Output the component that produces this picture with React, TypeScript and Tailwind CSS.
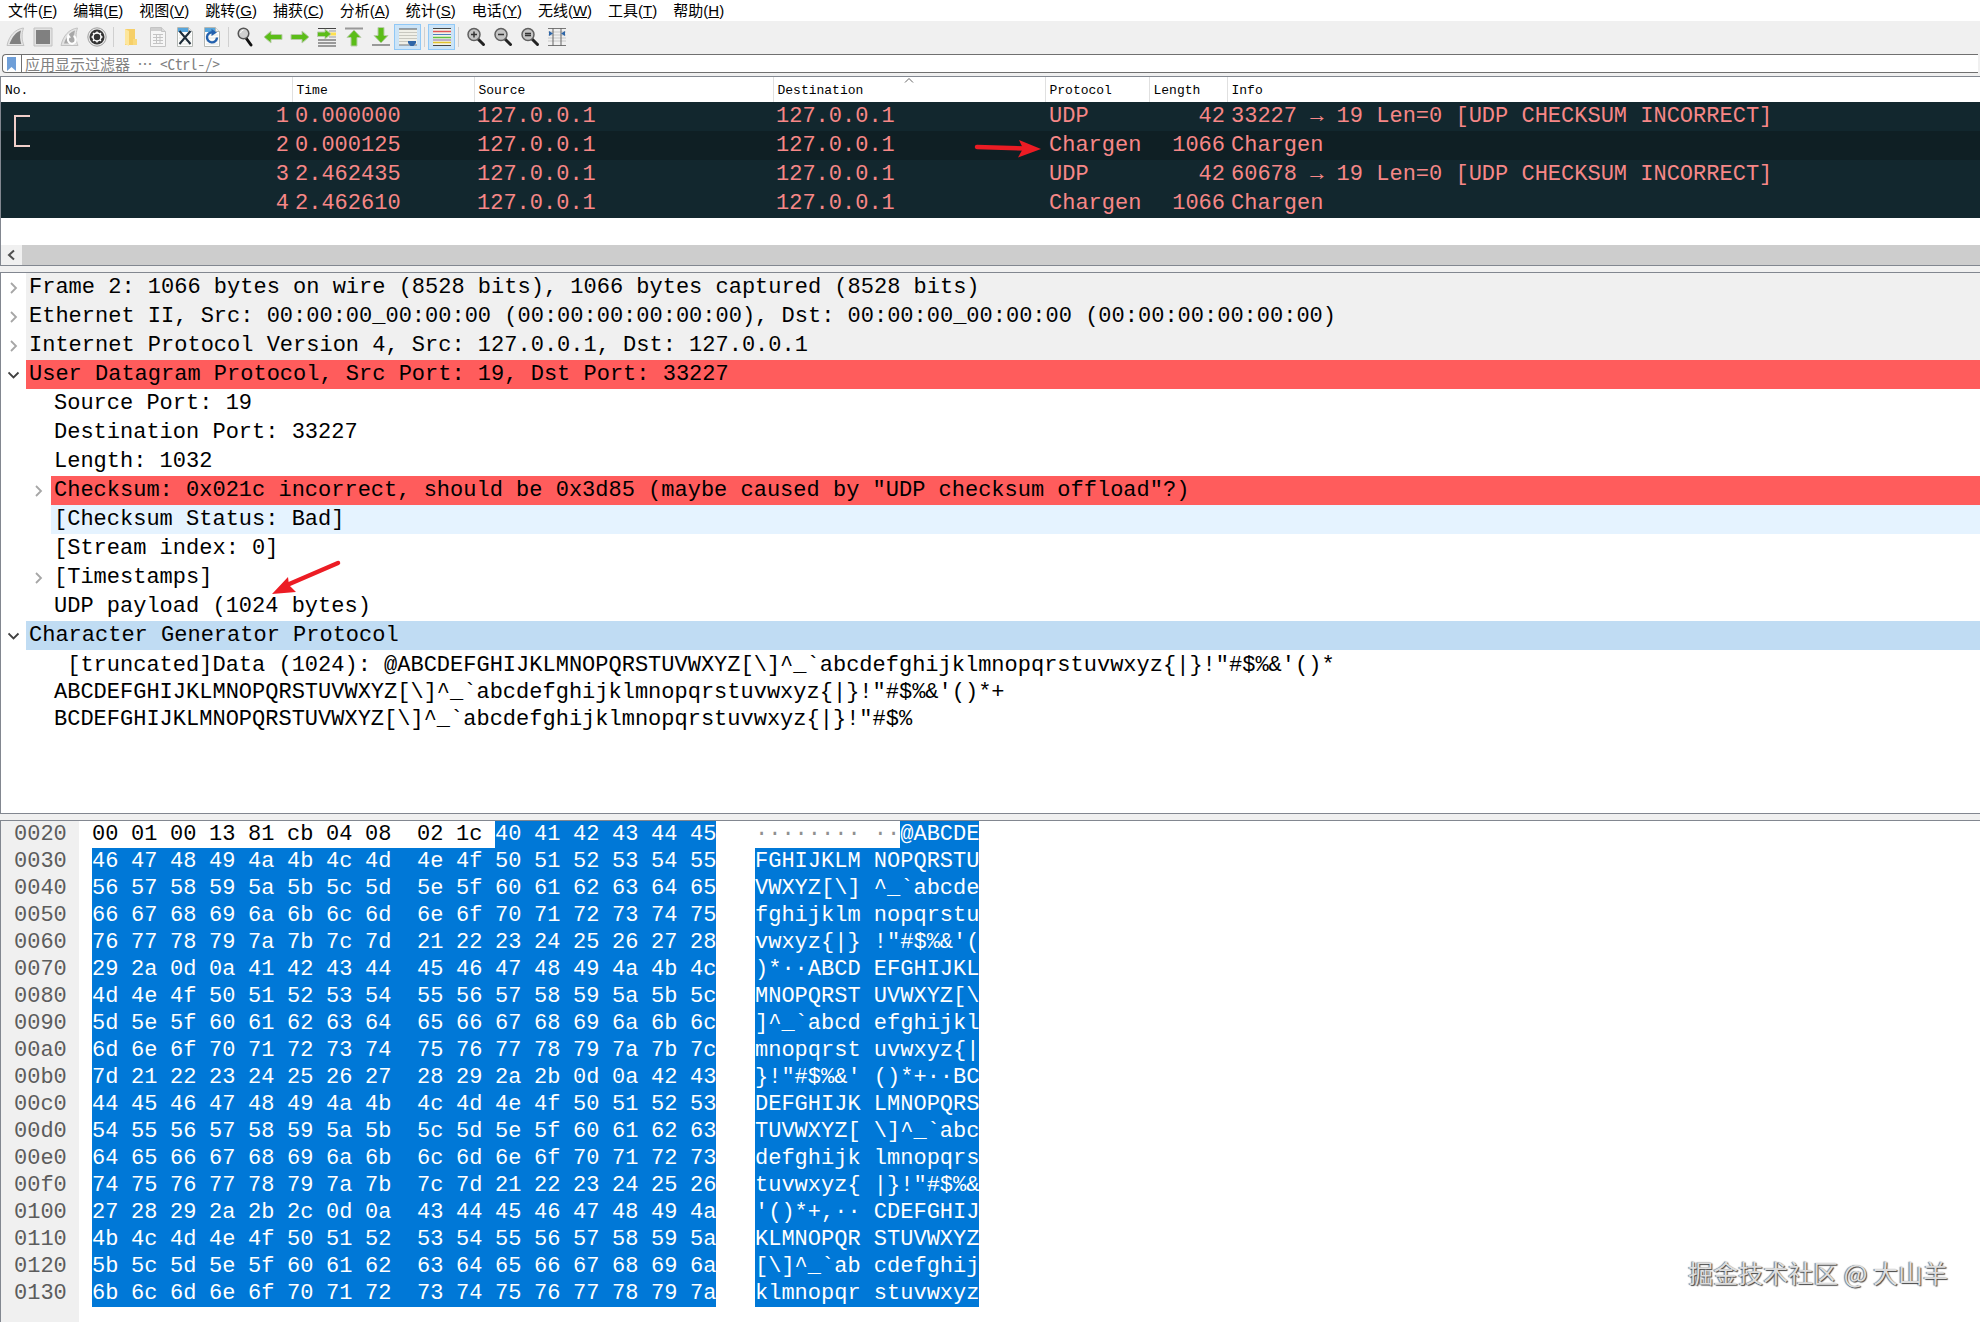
import React from 'react';

const MONO = "font-['Liberation_Mono','Noto_Sans_CJK_SC',monospace]";

const menus = [
  ['文件', 'F'], ['编辑', 'E'], ['视图', 'V'], ['跳转', 'G'], ['捕获', 'C'], ['分析', 'A'],
  ['统计', 'S'], ['电话', 'Y'], ['无线', 'W'], ['工具', 'T'], ['帮助', 'H'],
];

const packets = [
  { no: 1, time: '0.000000', proto: 'UDP', len: 42, info: '33227 → 19 Len=0 [UDP CHECKSUM INCORRECT]' },
  { no: 2, time: '0.000125', proto: 'Chargen', len: 1066, info: 'Chargen' },
  { no: 3, time: '2.462435', proto: 'UDP', len: 42, info: '60678 → 19 Len=0 [UDP CHECKSUM INCORRECT]' },
  { no: 4, time: '2.462610', proto: 'Chargen', len: 1066, info: 'Chargen' },
];

type TreeRow = { text: string; level: number; arrow?: 'open' | 'closed'; bg?: string };

const tree: TreeRow[] = [
  { text: 'Frame 2: 1066 bytes on wire (8528 bits), 1066 bytes captured (8528 bits)', level: 0, arrow: 'closed', bg: 'bg-[#f0f0f0]' },
  { text: 'Ethernet II, Src: 00:00:00_00:00:00 (00:00:00:00:00:00), Dst: 00:00:00_00:00:00 (00:00:00:00:00:00)', level: 0, arrow: 'closed', bg: 'bg-[#f0f0f0]' },
  { text: 'Internet Protocol Version 4, Src: 127.0.0.1, Dst: 127.0.0.1', level: 0, arrow: 'closed', bg: 'bg-[#f0f0f0]' },
  { text: 'User Datagram Protocol, Src Port: 19, Dst Port: 33227', level: 0, arrow: 'open', bg: 'bg-[#ff5c5c]' },
  { text: 'Source Port: 19', level: 1 },
  { text: 'Destination Port: 33227', level: 1 },
  { text: 'Length: 1032', level: 1 },
  { text: 'Checksum: 0x021c incorrect, should be 0x3d85 (maybe caused by "UDP checksum offload"?)', level: 1, arrow: 'closed', bg: 'bg-[#ff5c5c]' },
  { text: '[Checksum Status: Bad]', level: 1, bg: 'bg-[#e5f3ff]' },
  { text: '[Stream index: 0]', level: 1 },
  { text: '[Timestamps]', level: 1, arrow: 'closed' },
  { text: 'UDP payload (1024 bytes)', level: 1 },
  { text: 'Character Generator Protocol', level: 0, arrow: 'open', bg: 'bg-[#c0dcf3]' },
];

const truncated = [
  ' [truncated]Data (1024): @ABCDEFGHIJKLMNOPQRSTUVWXYZ[\\]^_`abcdefghijklmnopqrstuvwxyz{|}!"#$%&\'()*',
  'ABCDEFGHIJKLMNOPQRSTUVWXYZ[\\]^_`abcdefghijklmnopqrstuvwxyz{|}!"#$%&\'()*+',
  'BCDEFGHIJKLMNOPQRSTUVWXYZ[\\]^_`abcdefghijklmnopqrstuvwxyz{|}!"#$%',
];

// UDP header tail, then the chargen payload: 72 rotating characters per line + CRLF
const HEADER = [0x00, 0x01, 0x00, 0x13, 0x81, 0xcb, 0x04, 0x08, 0x02, 0x1c];

function buildBytes(total: number) {
  const out = [...HEADER];
  for (let line = 0; out.length < total; line++) {
    let c = 0x40 + line;
    for (let i = 0; i < 72; i++) {
      out.push(c);
      c = c === 0x7d ? 0x21 : c + 1;
    }
    out.push(0x0d, 0x0a);
  }
  return out.slice(0, total);
}

const bytes = buildBytes(18 * 16);

const hex = (n: number, width: number) => n.toString(16).padStart(width, '0');

// wider cell after the eighth byte, no trailing gap after the last one
function byteWidth(col: number) {
  if (col === 7) return 'w-[52px]';
  return col === 15 ? 'w-[26px]' : 'w-[39px]';
}

function asciiText(row: number[], from: number, to: number) {
  return row.slice(from, to).map((b, i) => {
    const ch = b > 0x20 && b < 0x7f ? String.fromCharCode(b) : '·';
    return ch + (from + i === 7 ? ' ' : '');
  }).join('');
}

function Separator() {
  return <div className="mx-[3px] h-5 w-px bg-[#d0d0d0]" />;
}

function Tool({ label, active, children }: { label: string; active?: boolean; children: React.ReactNode }) {
  return (
    <button
      type="button"
      aria-label={label}
      className={`flex h-[26px] w-[27px] items-center justify-center ${active ? 'border border-[#90c8f6] bg-[#cce4f7]' : ''}`}
    >
      <svg width="20" height="20" viewBox="0 0 20 20" fill="none">{children}</svg>
    </button>
  );
}

function Page() {
  return (
    <>
      <path d="M2.5 .5h11l4 4v15h-15z" fill="#fdfdfd" stroke="#b4b8b4" />
      <path d="M3 1h10v4H3z" fill="#58a6dc" />
      <path d="M13.5 .5v4h4" fill="#eee" stroke="#b4b8b4" />
      <path d="M4 8h12M4 11h12M4 14h12M4 17h12" stroke="#e2e6e0" />
    </>
  );
}

function Magnifier({ children }: { children?: React.ReactNode }) {
  return (
    <>
      <path d="M11.5 11.5l6 6" stroke="#222" strokeWidth="3" strokeLinecap="round" />
      <circle cx="8" cy="7.500" r="6" fill="#c4c4c4" stroke="#606060" strokeWidth="1.500" />
      {children}
    </>
  );
}

function Toolbar() {
  return (
    <div className="flex h-[31px] items-center bg-[#f0f0f0] pl-0.5">
      <Tool label="开始捕获">
        <path d="M1 18.500C3 9 9 2 17.500 1c-2 6-2 12 .5 17.500z" fill="#e6e6e6" stroke="#c2c2c2" />
        <path d="M3.500 17C6 10 10 5 15 3.500c-1.500 4.500-1 9.500 .3 13.500z" fill="#808080" />
      </Tool>
      <Tool label="停止捕获">
        <path d="M1 1h18v18H1z" fill="#e2e2e2" stroke="#c2c2c2" />
        <path d="M3 3h14v14H3z" fill="#808080" />
      </Tool>
      <Tool label="重新开始捕获">
        <path d="M1 18.500C3 9 9 2 17.500 1c-2 6-2 12 .5 17.500z" fill="#e2e2e2" stroke="#c2c2c2" />
        <path d="M4 16.500C6 10 10 5 15 3.500c-1.500 4.500-1 9.500 .3 13z" fill="#a8a8a8" />
        <path d="M13.500 9a4 4 0 1 1-5 1.500" stroke="#fff" strokeWidth="2" />
        <path d="M8 6.500l3 4-4.500 1z" fill="#fff" />
      </Tool>
      <Tool label="捕获选项">
        <circle cx="10" cy="10" r="9.200" fill="#e8e8e8" stroke="#a0a0a0" />
        <circle cx="10" cy="10" r="7.500" fill="#333" />
        <path d="M10 4.500v11M4.500 10h11M6 6l8 8M6 14l8-8" stroke="#fff" strokeWidth="1.400" />
        <circle cx="10" cy="10" r="4" fill="#333" stroke="#fff" strokeWidth="1.500" />
      </Tool>
      <Separator />
      <Tool label="打开">
        <path d="M4 2h10v16H4z" fill="#f6cf68" />
        <path d="M4 2l4 2v15l-4-2z" fill="#fde69c" />
        <path d="M12 12h4v6h-4z" fill="#f9d97c" />
      </Tool>
      <Tool label="保存">
        <path d="M2.500 .5h11l4 4v15h-15z" fill="#f6f6f6" stroke="#c4c4c4" />
        <path d="M13.500 .5v4h4" fill="#ddd" stroke="#c4c4c4" />
        <path d="M3 1h10v3H3z" fill="#cfcfcf" />
        <path d="M5 7.500h10M5 10.500h10M5 13.500h10M5 16.500h10M8.500 7v10M12 7v10" stroke="#c4c4c4" />
      </Tool>
      <Tool label="关闭">
        <Page />
        <path d="M4.500 4l11 13M15.500 4l-11 13" stroke="#1d2b38" strokeWidth="2" />
      </Tool>
      <Tool label="重新加载">
        <Page />
        <path d="M11 5.500A5 5 0 1 0 15 10.500" stroke="#2461ae" strokeWidth="2.400" />
        <path d="M9.500 2l5.500 3.500-5.500 3.500z" fill="#2461ae" />
      </Tool>
      <Separator />
      <Tool label="查找分组">
        <path d="M10 11l5 7" stroke="#111" strokeWidth="3" strokeLinecap="round" />
        <circle cx="7.500" cy="6.500" r="5.300" fill="#d0d0d0" stroke="#555" strokeWidth="1.500" />
        <path d="M4.500 6a3.500 3.500 0 0 1 3-3" stroke="#fff" />
      </Tool>
      <Tool label="上一分组">
        <path d="M1 10l7-6v3.500h11v5H8V16z" fill="#5bbd18" stroke="#b9ccaa" />
      </Tool>
      <Tool label="下一分组">
        <path d="M19 10l-7-6v3.500H1v5h11V16z" fill="#5bbd18" stroke="#b9ccaa" />
      </Tool>
      <Tool label="转到分组">
        <path d="M1 1.500h18M1 13h18M1 16h18M1 19h18" stroke="#444" />
        <path d="M12 4h7M12 10h7" stroke="#999" />
        <path d="M12 5.500h7v3h-7z" fill="#ffe14d" />
        <path d="M14 7L8 2v3H.5v4.500H8V12z" fill="#5bbd18" stroke="#b9ccaa" />
      </Tool>
      <Tool label="首个分组">
        <path d="M1 1.500h18" stroke="#999" strokeWidth="2" />
        <path d="M10 3l7 7.500h-4V19H7v-8.500H3z" fill="#5bbd18" stroke="#b9ccaa" />
      </Tool>
      <Tool label="最新分组">
        <path d="M1 18h18" stroke="#999" strokeWidth="2" />
        <path d="M10 16l7-7.500h-4V.5H7v8H3z" fill="#5bbd18" stroke="#b9ccaa" />
      </Tool>
      <Tool label="自动滚动" active>
        <path d="M1 2h18v16H1z" fill="#f0f0e8" />
        <path d="M1 2h18" stroke="#555" />
        <path d="M1 5.500h18M1 8.500h18M1 11.500h18M1 14.500h9" stroke="#c8c8c0" />
        <path d="M1 18h18" stroke="#777" />
        <path d="M10 14h8v2l-2.500 3h-3L10 16z" fill="#2f66a8" />
      </Tool>
      <Separator />
      <Tool label="着色" active>
        <path d="M1 1h18v18H1z" fill="#f2f2ea" />
        <path d="M1 1.500h18" stroke="#444" />
        <path d="M1 4.500h18" stroke="#e05555" strokeWidth="1.500" />
        <path d="M1 7.500h18" stroke="#4f7fc0" />
        <path d="M1 10.500h18" stroke="#62c13f" strokeWidth="1.500" />
        <path d="M1 13h18" stroke="#8a6aa8" />
        <path d="M1 15.500h18" stroke="#e0c12e" strokeWidth="1.500" />
        <path d="M1 18.500h18" stroke="#444" />
      </Tool>
      <Separator />
      <Tool label="放大">
        <Magnifier><path d="M5 7.500h6M8 4.500v6" stroke="#333" strokeWidth="1.500" /></Magnifier>
      </Tool>
      <Tool label="缩小">
        <Magnifier><path d="M5 7.500h6" stroke="#333" strokeWidth="1.500" /></Magnifier>
      </Tool>
      <Tool label="原始大小">
        <Magnifier><path d="M5 6.500h6M5 8.500h6" stroke="#333" strokeWidth="1.500" /></Magnifier>
      </Tool>
      <Tool label="调整列宽">
        <path d="M1 1.500h18M1 18.500h18" stroke="#777" />
        <path d="M1 5h18M1 8h18M1 11h18M1 14h18" stroke="#c8c8c8" />
        <path d="M6 1v18M14 1v18" stroke="#666" />
        <path d="M2 4l4 2.500L2 9zM18 4l-4 2.500L18 9z" fill="#2f66a8" />
      </Tool>
    </div>
  );
}

function PacketList() {
  const th = 'border-l border-[#e0e0e0] pt-0.5 pl-1 text-left font-normal';
  return (
    <section className="relative border border-r-0 border-[#828790] bg-white">
      <table className={`w-full table-fixed border-collapse whitespace-pre ${MONO}`}>
        <colgroup>
          <col className="w-[291px]" />
          <col className="w-[182px]" />
          <col className="w-[299px]" />
          <col className="w-[272px]" />
          <col className="w-[104px]" />
          <col className="w-[78px]" />
          <col />
        </colgroup>
        <thead>
          <tr className="h-[25px] text-[13px] leading-4 text-black">
            <th className="pt-0.5 pl-1 text-left font-normal">No.</th>
            <th className={th}>Time</th>
            <th className={th}>Source</th>
            <th className={th}>Destination</th>
            <th className={th}>Protocol</th>
            <th className={th}>Length</th>
            <th className={th}>Info</th>
          </tr>
        </thead>
        <tbody className="text-[22px] leading-[29px] text-[#f78787]">
          {packets.map((p) => (
            <tr key={p.no} className={p.no === 2 ? 'bg-[#0f1f24]' : 'bg-[#12272e]'}>
              <td className="pr-[3px] text-right">{p.no}</td>
              <td className="pl-[3px]">{p.time}</td>
              <td className="pl-[3px]">127.0.0.1</td>
              <td className="pl-[3px]">127.0.0.1</td>
              <td className="pl-1">{p.proto}</td>
              <td className="pr-0.5 text-right">{p.len}</td>
              <td className="pl-1">{p.info}</td>
            </tr>
          ))}
        </tbody>
      </table>
      {/* sort indicator of the Destination column */}
      <svg className="absolute top-0 left-[903px]" width="10" height="7" viewBox="0 0 10 7" fill="none">
        <path d="M1 5.500l4-4 4 4" stroke="#666" />
      </svg>
      {/* conversation bracket */}
      <div className="absolute top-[38px] left-[13px] h-8 w-4 border-2 border-r-0 border-[#f0cfca]" />
      <svg className="absolute top-[57px] left-[972px]" width="70" height="26" viewBox="0 0 70 26" fill="none">
        <path d="M4 13l48 1.500" stroke="#ec1c24" strokeWidth="4.500" strokeLinecap="round" />
        <path d="M68 15L46 6l4 8.500-5 9z" fill="#ec1c24" />
      </svg>
      <div className="mt-[27px] flex h-5 bg-[#cdcdcd]">
        <button type="button" aria-label="向左滚动" className="flex w-[21px] items-center justify-center bg-[#f0f0f0]">
          <svg width="10" height="12" viewBox="0 0 10 12" fill="none">
            <path d="M7 1.500L2 6l5 4.500" stroke="#505050" strokeWidth="2" />
          </svg>
        </button>
      </div>
    </section>
  );
}

function Chevron({ open }: { open: boolean }) {
  return (
    <svg width="12" height="12" viewBox="0 0 12 12" fill="none">
      {open
        ? <path d="M.5 3.500l5 5 5-5" stroke="#404040" strokeWidth="1.800" />
        : <path d="M3 1l5 5-5 5" stroke="#a6a6a6" strokeWidth="1.800" />}
    </svg>
  );
}

function DetailTree() {
  return (
    <section className={`relative border border-r-0 border-[#828790] bg-white pb-20 text-[22px] whitespace-pre text-black ${MONO}`}>
      {tree.map((row) => (
        <div key={row.text} className={`flex h-[29px] leading-7 ${row.level ? 'pl-[25px]' : ''}`}>
          <div className="flex w-[25px] shrink-0 items-center justify-center">
            {row.arrow && <Chevron open={row.arrow === 'open'} />}
          </div>
          <div className={`min-w-0 flex-1 pt-px pl-[3px] ${row.bg ?? ''}`}>{row.text}</div>
        </div>
      ))}
      <div className="pt-0.5 pl-[53px] leading-[27px]">
        {truncated.map((line) => <div key={line}>{line}</div>)}
      </div>
      <svg className="absolute top-[286px] left-[268px]" width="74" height="38" viewBox="0 0 74 38" fill="none">
        <path d="M69 4L18 26" stroke="#ec1c24" strokeWidth="4.500" strokeLinecap="round" />
        <path d="M3 35l16-17 1 8 7 7z" fill="#ec1c24" />
      </svg>
    </section>
  );
}

function HexDump() {
  const rows = Array.from({ length: 18 }, (_, i) => bytes.slice(i * 16, i * 16 + 16));
  return (
    <section className={`flex flex-1 border-t border-l border-[#828790] bg-white text-[22px] leading-[27px] whitespace-pre ${MONO}`}>
      <div className="w-[78px] bg-[#f0f0f0] pl-[13px] text-[#5c5c5c]">
        {rows.map((_, i) => <div key={i}>{hex(0x20 + i * 16, 4)}</div>)}
      </div>
      <div className="ml-[13px] text-black">
        {rows.map((row, i) => (
          <div key={i} className="flex">
            {row.map((b, col) => {
              const selected = i > 0 || col >= HEADER.length;
              return (
                <span key={col} className={`${byteWidth(col)} ${selected ? 'bg-[#0078d7] text-white' : ''}`}>
                  {hex(b, 2)}
                </span>
              );
            })}
          </div>
        ))}
      </div>
      <div className="ml-[39px]">
        {rows.map((row, i) => {
          const split = i === 0 ? HEADER.length : 0;
          return (
            <div key={i} className="flex">
              <span className="text-[#909090]">{asciiText(row, 0, split)}</span>
              <span className="bg-[#0078d7] text-white">{asciiText(row, split, 16)}</span>
            </div>
          );
        })}
      </div>
    </section>
  );
}

export default function App() {
  return (
    <div className="relative flex min-h-screen flex-col overflow-hidden bg-[#f0f0f0]">
      <nav className="flex h-[21px] items-center gap-4 bg-white pl-2 font-['Liberation_Sans','Noto_Sans_CJK_SC',sans-serif] text-[15px] leading-[18px] text-black">
        {menus.map(([name, key]) => (
          <button key={key} type="button" className="whitespace-nowrap">
            {name}(<span className="underline">{key}</span>)
          </button>
        ))}
      </nav>
      <Toolbar />
      <div className="mt-0.5 mr-0.5 mb-[3px] ml-0.5 flex h-[19px] items-center rounded-l-sm border border-r-0 border-[#707070] bg-white">
        <svg className="mx-1" width="10" height="14" viewBox="0 0 10 14">
          <path d="M0 0h9v14L4.500 10 0 14z" fill="#6f9fd8" />
        </svg>
        <div className="h-full w-px bg-[#707070]" />
        <input
          aria-label="显示过滤器"
          placeholder="应用显示过滤器 … <Ctrl-/>"
          className="h-full min-w-0 flex-1 pl-[3px] font-['Noto_Sans_Mono_CJK_SC','Noto_Sans_CJK_SC',monospace] text-[15px] leading-4 outline-none placeholder:text-[#808080]"
        />
      </div>
      <PacketList />
      <div className="h-[6px]" />
      <DetailTree />
      <div className="h-[6px]" />
      <HexDump />
      <div className="absolute right-8 bottom-8 font-['Noto_Sans_CJK_SC',sans-serif] text-[25px] leading-[36px] text-[#dedede] [text-shadow:1px_1px_1px_#444,-1px_0_1px_#777]">
        掘金技术社区 @ 大山羊
      </div>
    </div>
  );
}
